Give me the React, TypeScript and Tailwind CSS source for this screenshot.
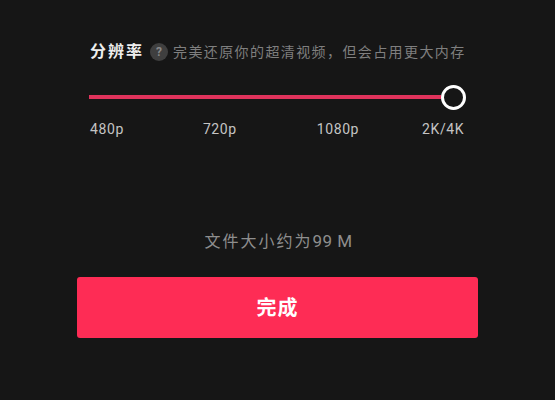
import React from 'react';

const labels = [
    { text: '480p', gap: 'ml-0' },
    { text: '720p', gap: 'ml-[79px]' },
    { text: '1080p', gap: 'ml-[80px]' },
    { text: '2K/4K', gap: 'ml-[63px]' },
];

const App = () => {
    return (
        <div className="w-[555px] h-[400px] overflow-hidden bg-[#161616] flex flex-col items-center font-['Roboto','Noto_Sans_CJK_SC',sans-serif]">
            <div className="w-[401px] pt-[40px] pl-[13px]">
                <div className="flex items-center h-[24px]">
                    <span className="text-[16px] leading-[24px] font-bold tracking-[2px] text-[#eeeeee] whitespace-nowrap">分辨率</span>
                    <span className="ml-[6px] w-[18px] h-[18px] rounded-full bg-[#3f3f3f] text-[#888888] text-[12px] font-bold flex items-center justify-center">?</span>
                    <span className="ml-[5px] text-[14px] leading-[24px] tracking-[1.4px] text-[#7f7f7f] whitespace-nowrap">完美还原你的超清视频，但会占用更大内存</span>
                </div>

                <div className="w-[377px] -ml-[1px] h-[28px] mt-[19px] flex items-center">
                    <div className="flex-1 h-[4px] bg-[#e0335c]" />
                    <div className="w-[25px] h-[25px] rounded-full border-[3px] border-white bg-[#161616] shrink-0" />
                </div>

                <div className="mt-[8px] flex">
                    {labels.map(label => (
                        <span key={label.text} className={`${label.gap} text-[14px] leading-[20px] tracking-[0.6px] text-[#c4c4c4]`}>{label.text}</span>
                    ))}
                </div>
            </div>

            <div className="mt-[90px] ml-[2px] h-[24px] text-[16px] leading-[24px] text-[#8e8e8e] whitespace-nowrap">
                <span className="tracking-[2px]">文件大小约为</span>
                <span className="text-[17px] tracking-[0.5px]">99 M</span>
            </div>

            <button className="mt-[24px] w-[401px] h-[61px] rounded-[3px] bg-[#fe2c55] text-white text-[20px] font-bold tracking-[1px]">完成</button>
        </div>
    );
};

export default App;
